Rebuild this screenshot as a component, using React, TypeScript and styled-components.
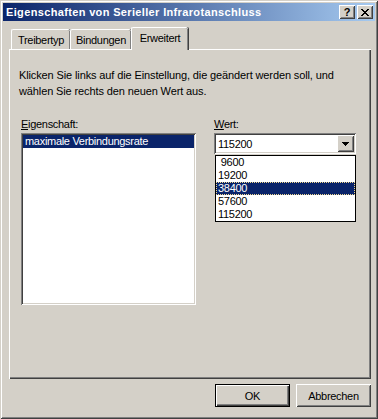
import React from "react";
import styled, { createGlobalStyle } from "styled-components";

const Global = createGlobalStyle`
  html, body { margin: 0; padding: 0; background: #D4D0C8; }
  body { font-family: "Liberation Sans", Arial, sans-serif; font-size: 11px; letter-spacing: -0.3px; color: #000; }
  * { box-sizing: border-box; }
`;

const raised = `
  box-shadow: inset 1px 1px #FFFFFF, inset -1px -1px #404040, inset 2px 2px #D4D0C8, inset -2px -2px #808080;
`;

const sunken = `
  box-shadow: inset 1px 1px #808080, inset -1px -1px #FFFFFF, inset 2px 2px #404040, inset -2px -2px #D4D0C8;
`;

const Window = styled.div`
  width: 378px;
  height: 419px;
  background: #D4D0C8;
  padding: 3px;
  display: flex;
  flex-direction: column;
  box-shadow: inset 1px 1px #D4D0C8, inset -1px -1px #404040, inset 2px 2px #FFFFFF, inset -2px -2px #808080;
`;

const TitleBar = styled.div`
  height: 18px;
  flex: none;
  display: flex;
  align-items: center;
  padding: 0 2px 0 3px;
  background: linear-gradient(to right, #0A246A, #A6CAF0);
`;

const Caption = styled.div`
  flex: 1;
  color: #fff;
  font-weight: bold;
  font-size: 11px;
  letter-spacing: 0.35px;
  white-space: nowrap;
`;

const CapButton = styled.div<{ $gap?: boolean }>`
  width: 16px;
  height: 14px;
  background: #D4D0C8;
  ${raised}
  margin-left: ${(p) => (p.$gap ? "2px" : "0")};
  display: flex;
  align-items: center;
  justify-content: center;
  font-weight: bold;
  font-size: 11px;
  letter-spacing: 0;
  line-height: 1;
`;

const Client = styled.div`
  flex: 1;
  display: flex;
  flex-direction: column;
  padding: 6px 4px 0 6px;
`;

const TabRow = styled.div`
  height: 22px;
  display: flex;
  align-items: flex-end;
  padding-left: 2px;
`;

const Tab = styled.div<{ $active?: boolean; $w: number }>`
  position: relative;
  width: ${(p) => p.$w}px;
  height: ${(p) => (p.$active ? 23 : 20)}px;
  margin-bottom: ${(p) => (p.$active ? -1 : 0)}px;
  z-index: ${(p) => (p.$active ? 1 : 0)};
  background: #D4D0C8;
  border-top: 1px solid #fff;
  border-left: 1px solid #fff;
  border-top-left-radius: 2px;
  border-top-right-radius: 2px;
  box-shadow: inset -1px 0 #808080, 1px 0 #404040;
  display: flex;
  align-items: ${(p) => (p.$active ? "flex-start" : "center")};
  padding-top: ${(p) => (p.$active ? 4 : 0)}px;
  justify-content: center;
  white-space: nowrap;
`;

const Panel = styled.div`
  height: 330px;
  background: #D4D0C8;
  box-shadow: inset 1px 1px #FFFFFF, inset -1px -1px #404040, inset -2px -2px #808080;
  padding: 18px 10px 0 10px;
  display: flex;
  flex-direction: column;
`;

const Intro = styled.p`
  margin: 0;
  line-height: 16px;
  letter-spacing: -0.12px;
`;

const Columns = styled.div`
  display: flex;
  margin-top: 19px;
  padding-left: 2px;
`;

const Column = styled.div<{ $w: number; $ml?: number }>`
  width: ${(p) => p.$w}px;
  margin-left: ${(p) => p.$ml ?? 0}px;
  display: flex;
  flex-direction: column;
  position: relative;
`;

const Label = styled.div`
  height: 15px;
  line-height: 13px;
`;

const ListBox = styled.div`
  height: 172px;
  background: #fff;
  ${sunken}
  padding: 2px;
`;

const ListItem = styled.div<{ $sel?: boolean; $focus?: boolean }>`
  height: 13px;
  line-height: 13px;
  padding-left: 2px;
  background: ${(p) => (p.$sel ? "#0A246A" : "transparent")};
  color: ${(p) => (p.$sel ? "#fff" : "#000")};
  outline: ${(p) => (p.$focus ? "1px dotted #F0D890" : "none")};
  outline-offset: -1px;
`;

const Combo = styled.div`
  height: 21px;
  background: #fff;
  ${sunken}
  padding: 2px;
  display: flex;
  align-items: center;
`;

const ComboText = styled.div`
  flex: 1;
  padding-left: 2px;
`;

const ArrowButton = styled.div`
  width: 17px;
  height: 17px;
  background: #D4D0C8;
  ${raised}
  display: flex;
  align-items: center;
  justify-content: center;
`;

const DropList = styled.div`
  position: absolute;
  top: 37px;
  left: 1px;
  width: 141px;
  background: #fff;
  border: 1px solid #000;
  z-index: 2;
`;

const ButtonRow = styled.div`
  display: flex;
  justify-content: flex-end;
  gap: 6px;
  padding: 5px 0 0 0;
`;

const Button = styled.div<{ $default?: boolean }>`
  width: 75px;
  height: 23px;
  background: #D4D0C8;
  display: flex;
  align-items: center;
  justify-content: center;
  ${(p) =>
    p.$default
      ? `box-shadow: inset 0 0 0 1px #000, inset 2px 2px #FFFFFF, inset -2px -2px #404040, inset -3px -3px #808080;`
      : raised}
`;

const U = styled.span`
  text-decoration: underline;
`;

export default function App() {
  return (
    <>
      <Global />
      <Window>
        <TitleBar>
          <Caption>Eigenschaften von Serieller Infrarotanschluss</Caption>
          <CapButton>?</CapButton>
          <CapButton $gap>
            <svg width="8" height="7" viewBox="0 0 8 7" shapeRendering="crispEdges">
              <path d="M0 0h2v1h-2zM6 0h2v1h-2zM1 1h2v1h-2zM5 1h2v1h-2zM2 2h4v1h-4zM3 3h2v1h-2zM2 4h4v1h-4zM1 5h2v1h-2zM5 5h2v1h-2zM0 6h2v1h-2zM6 6h2v1h-2z" fill="#000" />
            </svg>
          </CapButton>
        </TitleBar>
        <Client>
          <TabRow>
            <Tab $w={59}>Treibertyp</Tab>
            <Tab $w={61}>Bindungen</Tab>
            <Tab $w={57} $active>Erweitert</Tab>
          </TabRow>
          <Panel>
            <Intro>
              Klicken Sie links auf die Einstellung, die geändert werden soll, und
              <br />
              wählen Sie rechts den neuen Wert aus.
            </Intro>
            <Columns>
              <Column $w={175}>
                <Label>
                  <U>E</U>igenschaft:
                </Label>
                <ListBox>
                  <ListItem $sel>maximale Verbindungsrate</ListItem>
                </ListBox>
              </Column>
              <Column $w={142} $ml={18}>
                <Label>
                  <U>W</U>ert:
                </Label>
                <Combo>
                  <ComboText>115200</ComboText>
                  <ArrowButton>
                    <svg width="7" height="4" viewBox="0 0 7 4" shapeRendering="crispEdges">
                      <path d="M0 0h7v1h-7zM1 1h5v1h-5zM2 2h3v1h-3zM3 3h1v1h-1z" fill="#000" />
                    </svg>
                  </ArrowButton>
                </Combo>
                <DropList>
                  <ListItem>&nbsp;9600</ListItem>
                  <ListItem>19200</ListItem>
                  <ListItem $sel $focus>38400</ListItem>
                  <ListItem>57600</ListItem>
                  <ListItem>115200</ListItem>
                </DropList>
              </Column>
            </Columns>
          </Panel>
          <ButtonRow>
            <Button $default>OK</Button>
            <Button>Abbrechen</Button>
          </ButtonRow>
        </Client>
      </Window>
    </>
  );
}
